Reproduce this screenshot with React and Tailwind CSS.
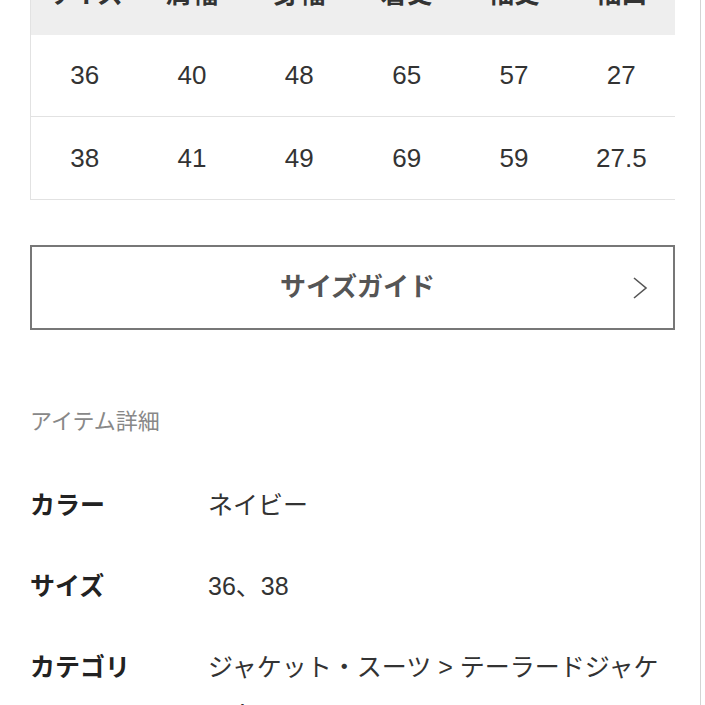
import React from 'react';

const headers = ['サイズ', '肩幅', '身幅', '着丈', '袖丈', '袖口'];
const rows = [
  ['36', '40', '48', '65', '57', '27'],
  ['38', '41', '49', '69', '59', '27.5'],
];

const details = [
  { label: 'カラー', value: 'ネイビー' },
  { label: 'サイズ', value: '36、38' },
  { label: 'カテゴリ', value: 'ジャケット・スーツ > テーラードジャケット' },
];

const font = { fontFamily: '"Liberation Sans", "Noto Sans CJK JP", sans-serif' };

export default function App() {
  return (
    <div className="w-[705px] h-[705px] overflow-hidden bg-white" style={font}>
      <div className="flex flex-col w-[701px] h-full border-r border-[#d4d4d4] pl-[30px] pr-[25px]">
        {/* Size table */}
        <div className="-mt-[47px] border-l border-b border-[#e2e2e2]">
          <div className="grid grid-cols-6 h-[82px] items-center bg-[#eeeeee] text-center text-[26px] font-bold text-[#333]">
            {headers.map((h) => (
              <div key={h}>{h}</div>
            ))}
          </div>
          {rows.map((r, i) => (
            <div
              key={i}
              className={`grid grid-cols-6 h-[82px] items-center text-center text-[26px] text-[#333] ${
                i === 0 ? 'border-b border-[#e2e2e2]' : ''
              }`}
            >
              {r.map((c, j) => (
                <div key={j}>{c}</div>
              ))}
            </div>
          ))}
        </div>

        {/* Size guide button */}
        <div className="relative mt-[45px] h-[85px] shrink-0 border-2 border-[#777] flex items-center justify-center pl-[10px]">
          <span className="text-[26px] font-bold text-[#555]">サイズガイド</span>
          <svg
            className="absolute right-[25px] top-1/2 -translate-y-1/2"
            width="16"
            height="24"
            viewBox="0 0 16 24"
            fill="none"
          >
            <polyline points="2,2 14,12 2,22" stroke="#555" strokeWidth="1.6" />
          </svg>
        </div>

        {/* Item details */}
        <h3 className="mt-[77px] h-[30px] shrink-0 leading-[30px] text-[22px] text-[#888]">アイテム詳細</h3>
        <div className="mt-[28px]">
          {details.map((d) => (
            <div key={d.label} className="flex py-[17px] leading-[47px] text-[25px] text-[#333]">
              <div className="w-[178px] shrink-0 font-bold text-[#222]">{d.label}</div>
              <div className="flex-1">{d.value}</div>
            </div>
          ))}
        </div>
      </div>
    </div>
  );
}
